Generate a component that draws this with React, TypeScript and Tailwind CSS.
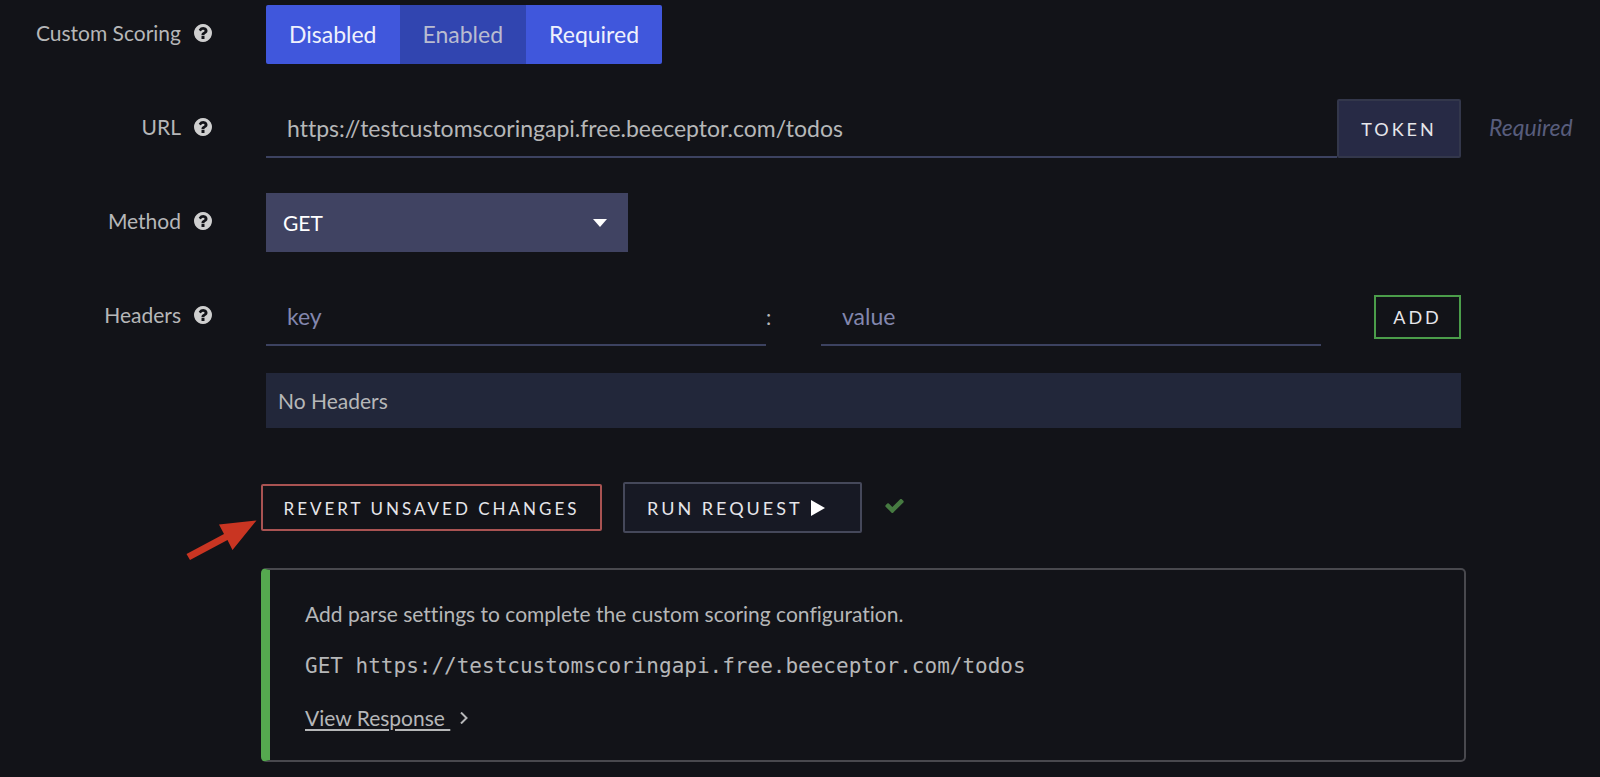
import React, { useState } from 'react';
import clsx from 'clsx';

type ScoringMode = 'Disabled' | 'Enabled' | 'Required';

const scoringModes: ScoringMode[] = ['Disabled', 'Enabled', 'Required'];

const inputStyles =
  'h-[59px] w-full min-w-0 border-b-2 border-[#3c4260] bg-transparent px-[21px] text-[23px] text-[#b6b7b8] placeholder:text-[#8387ae] placeholder:opacity-100 outline-none';

function HelpIcon() {
  return (
    <svg viewBox="128 128 1536 1536" className="h-[18px] w-[18px] fill-[#cfcfcf]" aria-hidden="true">
      <path d="M1024 1376v-192q0-14-9-23t-23-9h-192q-14 0-23 9t-9 23v192q0 14 9 23t23 9h192q14 0 23-9t9-23zM1280 704q0-88-55.500-163t-138.500-116-170-41q-243 0-371 213-15 24 8 42l132 100q7 6 19 6 16 0 25-12 53-68 86-92 34-24 86-24 48 0 85.500 26t37.500 59q0 38-20 61t-68 45q-63 28-115.500 86.500t-52.500 125.500v36q0 14 9 23t23 9h192q14 0 23-9t9-23q0-19 21.500-49.500t54.500-49.500q32-18 49-28.500t46-35 44.500-48 28-60.500 12.500-81zM1664 896q0 209-103 385.500t-279.500 279.500-385.500 103-385.500-103-279.500-279.500-103-385.500 103-385.500 279.500-279.500 385.500-103 385.500 103 279.500 279.500 103 385.500z" />
    </svg>
  );
}

function CheckIcon() {
  return (
    <svg viewBox="121 344 1550 1178" className="h-[14px] w-[19px] fill-[#467a41]" role="img" aria-label="Request succeeded">
      <path d="M1671 566q0 40-28 68l-724 724-136 136q-28 28-68 28t-68-28l-136-136-362-362q-28-28-28-68t28-68l136-136q28-28 68-28t68 28l294 295 656-657q28-28 68-28t68 28l136 136q28 28 28 68z" />
    </svg>
  );
}

interface FieldRowProps {
  label: string;
  htmlFor?: string;
  hint?: string;
  children: React.ReactNode;
}

function FieldRow({ label, htmlFor, hint, children }: FieldRowProps) {
  const labelStyles = 'flex h-14 w-[212px] shrink-0 items-center justify-end gap-[13px]';

  return (
    <div className="flex">
      {htmlFor ? (
        <label htmlFor={htmlFor} className={labelStyles}>
          {label}
          <HelpIcon />
        </label>
      ) : (
        <div className={labelStyles}>
          {label}
          <HelpIcon />
        </div>
      )}
      <div className="ml-[54px] mr-7 min-w-0 flex-1">{children}</div>
      <div className="flex h-14 w-[111px] shrink-0 items-center text-[23px] italic text-[#585d7c]">{hint}</div>
    </div>
  );
}

export default function App() {
  const [mode, setMode] = useState<ScoringMode>('Enabled');
  const [url, setUrl] = useState('https://testcustomscoringapi.free.beeceptor.com/todos');
  const [method, setMethod] = useState('GET');
  const [headerKey, setHeaderKey] = useState('');
  const [headerValue, setHeaderValue] = useState('');

  return (
    <main className="min-h-screen bg-[#121318] pt-[5px] font-['Lato',sans-serif] text-[21px] leading-7 text-[#b6b7b8] [font-variant-ligatures:none]">
      <div className="flex flex-col gap-[35px]">
        <FieldRow label="Custom Scoring">
          <div role="group" aria-label="Custom Scoring" className="flex">
            {scoringModes.map((item) => (
              <button
                key={item}
                type="button"
                aria-pressed={mode === item}
                onClick={() => setMode(item)}
                className={clsx(
                  'h-[59px] px-[23px] pb-0.5 text-[23px] first:rounded-l-xs last:rounded-r-xs',
                  mode === item ? 'bg-[#3145b0] text-[#b9bcd0]' : 'bg-[#4057dc] text-[#eff1fc]'
                )}
              >
                {item}
              </button>
            ))}
          </div>
        </FieldRow>

        <FieldRow label="URL" htmlFor="url" hint="Required">
          <div className="flex">
            <input id="url" type="text" value={url} onChange={(e) => setUrl(e.target.value)} className={inputStyles} />
            <button
              type="button"
              className="h-[59px] w-[124px] shrink-0 rounded-xs border-2 border-[#33374b] bg-[#272a45] text-lg tracking-[3px] text-[#e6e6ea]"
            >
              TOKEN
            </button>
          </div>
        </FieldRow>

        <FieldRow label="Method" htmlFor="method">
          <div className="relative w-[362px]">
            <select
              id="method"
              value={method}
              onChange={(e) => setMethod(e.target.value)}
              className="h-[59px] w-full appearance-none bg-[#404362] px-[17px] text-[21px] text-white outline-none"
            >
              <option>GET</option>
              <option>POST</option>
            </select>
            <svg viewBox="0 0 14 8" className="pointer-events-none absolute right-[21px] top-[26px] h-2 w-[14px] fill-white" aria-hidden="true">
              <path d="M0 0h14L7 8z" />
            </svg>
          </div>
        </FieldRow>

        <FieldRow label="Headers" htmlFor="header-key">
          <div className="flex items-center">
            <input
              id="header-key"
              type="text"
              placeholder="key"
              value={headerKey}
              onChange={(e) => setHeaderKey(e.target.value)}
              className={clsx(inputStyles, 'flex-1')}
            />
            <span className="w-[55px] shrink-0">:</span>
            <input
              type="text"
              aria-label="Header value"
              placeholder="value"
              value={headerValue}
              onChange={(e) => setHeaderValue(e.target.value)}
              className={clsx(inputStyles, 'flex-1')}
            />
            <button
              type="button"
              className="ml-[53px] h-11 w-[87px] shrink-0 border-2 border-[#4b9d4a] text-lg tracking-[3px] text-[#e6e6ea]"
            >
              ADD
            </button>
          </div>
          <div className="mt-[27px] flex h-[55px] items-center bg-[#22273a] px-3">No Headers</div>
        </FieldRow>
      </div>

      <div className="relative mt-[54px] pl-[261px] pr-[134px]">
        {/* Callout arrow */}
        <svg viewBox="0 0 72 42" className="absolute left-[185px] top-[38px] h-[42px] w-[72px] fill-[#c93522]" aria-hidden="true">
          <path d="M1.500 34 39 14 34 4.500 71.500 0.500 47.500 30 42.500 20 5 40z" />
        </svg>

        <div className="flex items-center">
          <button
            type="button"
            className="h-[47px] w-[341px] rounded-xs border-2 border-[#a95352] pt-0.5 text-[17px] tracking-[3px] text-[#e6e6ea]"
          >
            REVERT UNSAVED CHANGES
          </button>
          <button
            type="button"
            className="ml-[21px] flex h-[51px] w-[239px] items-center gap-2 rounded-xs border-2 border-[#45485a] bg-[#171924] px-[22px] text-lg tracking-[3px] text-[#e6e6ea]"
          >
            RUN REQUEST
            <svg viewBox="0 0 14 16" className="h-4 w-[14px] fill-white" aria-hidden="true">
              <path d="M0 0 14 8 0 16z" />
            </svg>
          </button>
          <span className="ml-[23px] flex pb-1">
            <CheckIcon />
          </span>
        </div>

        <section className="mt-[35px] flex flex-col items-start gap-6 rounded-[5px] border-2 border-l-[9px] border-[#49494e] border-l-[#55a94f] pb-7 pl-[35px] pr-8 pt-[30px]">
          <p>Add parse settings to complete the custom scoring configuration.</p>
          <p className="font-['DejaVu_Sans_Mono',monospace]">
            GET https://testcustomscoringapi.free.beeceptor.com/todos
          </p>
          <a href="#response" className="flex items-center gap-2.5">
            <span className="whitespace-pre underline decoration-2 underline-offset-3">View Response </span>
            <svg viewBox="0 0 8 12" className="h-3 w-2 fill-none stroke-[#b6b7b8] stroke-2" aria-hidden="true">
              <path d="M1 0.500 6.500 6 1 11.500" />
            </svg>
          </a>
        </section>
      </div>
    </main>
  );
}
